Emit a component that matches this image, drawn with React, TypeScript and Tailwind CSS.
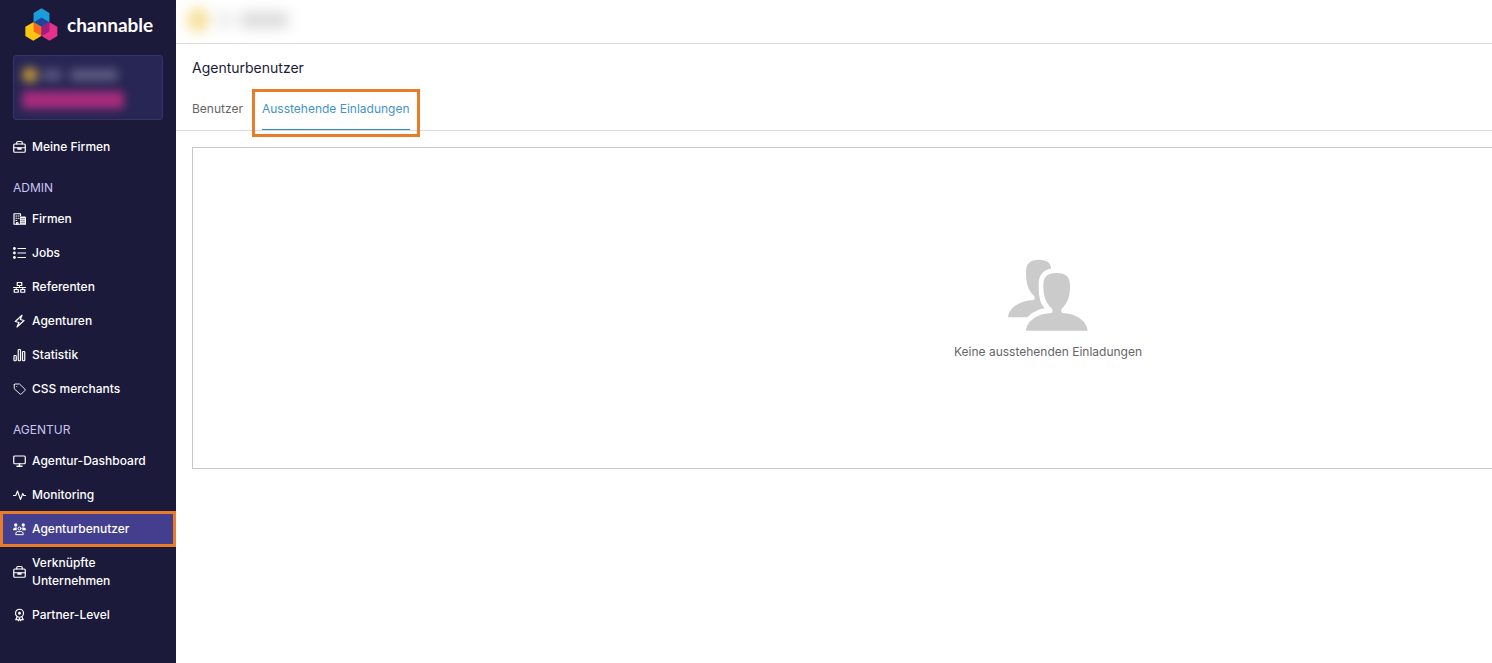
import React from 'react'

type NavItem = { label: string; icon: React.ReactNode; active?: boolean }

function Icon({ children }: { children: React.ReactNode }) {
  return (
    <svg
      viewBox="0 0 26 26"
      className="h-[14px] w-[13px] shrink-0"
      fill="none"
      stroke="currentColor"
      strokeWidth="2.4"
      strokeLinecap="round"
      strokeLinejoin="round"
      aria-hidden="true"
    >
      {children}
    </svg>
  )
}

const briefcase = (
  <Icon>
    <rect x="1.5" y="7" width="23" height="16.5" rx="2" />
    <path d="M7.5 7V4.500A2.500 2.500 0 0 1 10 2h6a2.500 2.500 0 0 1 2.500 2.500V7M1.500 14.500h23" />
    <path d="M10 15.500h6v2h-6z" />
  </Icon>
)

const building = (
  <Icon>
    <path d="M13 23.500H2V2.500h13V6" />
    <path d="M6 7h1.500M10.500 7H12M6 11.500h1.500M10.500 11.500H12M6 16h1.500" />
    <path d="M7 23.500V20h3v3.500" />
    <path d="M14 8h9.500A2.500 2.500 0 0 1 26 10.500v14H14z" fill="currentColor" stroke="none" />
    <path d="M16 12.500h7M16 16.500h7M16 20.500h7" stroke="#1b1a3a" strokeWidth="1.2" />
  </Icon>
)

const list = (
  <Icon>
    <path d="M10 4h15M10 13h15M10 22h15" />
    <g fill="currentColor" stroke="none">
      <circle cx="2.8" cy="4" r="2.8" />
      <circle cx="2.8" cy="13" r="2.8" />
      <circle cx="2.8" cy="22" r="2.8" />
    </g>
  </Icon>
)

const sitemap = (
  <Icon>
    <rect x="8.5" y="4" width="9" height="6" />
    <rect x="2.5" y="18" width="8" height="5.5" />
    <rect x="15.5" y="18" width="8" height="5.5" />
    <path d="M13 10v4M1 14h24M6.500 14v4M19.500 14v4" strokeWidth="2" />
  </Icon>
)

const bolt = (
  <Icon>
    <path d="M18 1.500 4.500 14l7.500 2-4 9L22 12l-7.500-2z" />
  </Icon>
)

const bars = (
  <Icon>
    <rect x="2" y="14" width="4.5" height="10.5" rx="1.5" />
    <rect x="10.5" y="2" width="4.5" height="22.5" rx="1.5" />
    <rect x="19" y="6" width="4.5" height="18.5" rx="1.5" />
  </Icon>
)

const tag = (
  <Icon>
    <path d="M2.500 4.500v8L14 23a2 2 0 0 0 2.800 0l7-7a2 2 0 0 0 0-2.800L13 3H4a1.500 1.500 0 0 0-1.500 1.500z" strokeWidth="1.8" />
    <circle cx="7.5" cy="8" r="1" fill="currentColor" stroke="none" />
  </Icon>
)

const monitor = (
  <Icon>
    <rect x="1.5" y="3" width="23" height="15.5" rx="2" />
    <path d="M13 18.500v4M8 23.500h10" strokeWidth="3" />
  </Icon>
)

const pulse = (
  <Icon>
    <path d="M1 14h4.500L9 5l6 17 4.500-12 2 4H25" strokeWidth="2.2" />
  </Icon>
)

const group = (
  <Icon>
    <g fill="currentColor" stroke="none">
      <circle cx="5.5" cy="5" r="3.3" />
      <circle cx="20.5" cy="5" r="3.3" />
      <path d="M0 15.500c0-4 2-5.500 4.500-5.500H8c-1 2-1 4 0 5.500zM26 15.500c0-4-2-5.500-4.500-5.500H18c1 2 1 4 0 5.500z" />
    </g>
    <circle cx="13" cy="12" r="3" strokeWidth="2" />
    <path d="M5.500 23.500c0-4.500 2-5.500 5-5.500h5c3 0 5 1 5 5.500z" strokeWidth="2" />
  </Icon>
)

const award = (
  <Icon>
    <circle cx="13" cy="9.5" r="8" />
    <circle cx="13" cy="9.5" r="2.8" fill="currentColor" stroke="none" />
    <path d="M8 17 5.500 22.500l3.500-.5 2 2.500 2-5 2 5 2-2.500 3.500.5L18 17" />
  </Icon>
)

const adminItems: NavItem[] = [
  { label: 'Firmen', icon: building },
  { label: 'Jobs', icon: list },
  { label: 'Referenten', icon: sitemap },
  { label: 'Agenturen', icon: bolt },
  { label: 'Statistik', icon: bars },
  { label: 'CSS merchants', icon: tag },
]

const agencyItems: NavItem[] = [
  { label: 'Agentur-Dashboard', icon: monitor },
  { label: 'Monitoring', icon: pulse },
  { label: 'Agenturbenutzer', icon: group, active: true },
  { label: 'Verknüpfte Unternehmen', icon: briefcase },
  { label: 'Partner-Level', icon: award },
]

function NavLink({ label, icon, active }: NavItem) {
  return (
    <a
      href="#"
      aria-current={active ? 'page' : undefined}
      className={
        active
          ? 'relative flex items-center gap-[6px] bg-[#433f8e] py-2 pr-6 pl-[13px] text-white'
          : 'relative flex items-center gap-[6px] py-2 pr-6 pl-[13px] text-white'
      }
    >
      {icon}
      <span>{label}</span>
      {active && <span className="absolute -inset-y-px inset-x-0 border-3 border-[#e87c2a]" />}
    </a>
  )
}

function Section({ title, items }: { title: string; items: NavItem[] }) {
  return (
    <div>
      <h2 className="px-[13px] pt-[15px] pb-[5px] text-[12px] font-normal text-[#c9c6f0]">{title}</h2>
      {items.map((item) => (
        <NavLink key={item.label} {...item} />
      ))}
    </div>
  )
}

function Logo() {
  return (
    <a href="#" className="flex items-center gap-[9px] pt-2 pl-[25px] text-white">
      <svg viewBox="75 22 100 100" className="h-[33px] w-[33px]" aria-hidden="true">
        <path fill="#1b9ddb" d="M125 23l24 14v28l-24 14-24-14V37z" />
        <path fill="#fdc513" d="M100 65l24 14v28l-24 14-24-14V79z" />
        <path fill="#e5308c" d="M149 65l24 14v28l-24 14-24-14V79z" />
        <path fill="#20449b" d="M125 51l24 14-24 14-24-14z" />
        <path fill="#f26a21" d="M101 65l24 14v28l-24-14z" />
        <path fill="#a01c7d" d="M149 65l-24 14v28l24-14z" />
      </svg>
      <span className="font-['Lato',sans-serif] text-[19px] leading-6 font-bold">channable</span>
    </a>
  )
}

function Sidebar() {
  return (
    <aside className="w-44 shrink-0 bg-[#1b1a3a] text-[12px] leading-[18px] font-medium">
      <Logo />
      <div className="mx-[13px] mt-[14px] mb-[10px] flex h-[65px] flex-col gap-2 overflow-hidden rounded-[3px] border border-[#35336a] bg-[#282654] px-2 pt-[11px]">
        <div className="flex items-center gap-1 blur-[5px]">
          <span className="h-4 w-4 rounded-full bg-[#b8943a]" />
          <span className="h-3 w-5 rounded bg-[#55537c]" />
          <span className="ml-1 h-3 w-12 rounded bg-[#5d5b82]" />
        </div>
        <span className="h-[18px] w-[102px] rounded bg-[#a52c7d] blur-[4px]" />
      </div>
      <nav>
        <NavLink label="Meine Firmen" icon={briefcase} />
        <Section title="ADMIN" items={adminItems} />
        <Section title="AGENTUR" items={agencyItems} />
      </nav>
    </aside>
  )
}

function PeopleIcon() {
  return (
    <svg viewBox="204 56 240 216" className="h-[72px] w-20" fill="#cbcbcb" aria-hidden="true">
      <path d="M258 95c0-25 12-37 38-37 22 0 36 8 38 26-24 6-38 20-38 46 0 34 2 56 18 74-22 4-40 14-52 27h-58c3-30 36-50 78-52 3-4 3-8 0-12-18-18-24-38-24-72z" />
      <path d="M310 136c0-26 12-38 40-38s40 12 40 38c0 32-6 50-24 68-3 5-3 9 0 14 42 2 74 22 77 53H258c3-31 35-51 77-53 3-5 3-9 0-14-18-18-25-36-25-68z" />
    </svg>
  )
}

export default function App() {
  return (
    <div className="flex min-h-screen overflow-hidden bg-white font-['Inter',sans-serif]">
      <Sidebar />
      <main className="min-w-0 flex-1">
        <header className="flex h-11 items-center border-b border-[#dcdcdc] px-3">
          <div className="flex items-center gap-2 pb-1 blur-[7px]">
            <span className="h-6 w-5 rounded-full bg-[#f5dc8c]" />
            <span className="h-4 w-4 bg-[#ececec]" />
            <span className="h-4 w-12 bg-[#dadada]" />
          </div>
        </header>
        <h1 className="px-4 pt-[14px] text-[14px] leading-5 text-[#1b1a3a]">Agenturbenutzer</h1>
        <div role="tablist" className="mt-[10px] flex gap-[19px] border-b border-[#dcdcdc] px-4 text-[12px] leading-[18px]">
          <button type="button" role="tab" aria-selected="false" className="h-[42px] text-[#666666]">
            Benutzer
          </button>
          <button type="button" role="tab" aria-selected="true" className="relative h-[42px] text-[#4493cb]">
            Ausstehende Einladungen
            <span className="absolute inset-x-0 bottom-0 h-px bg-[#2f8ac6]" />
            <span className="absolute -inset-x-[10px] top-[1px] -bottom-[7px] border-3 border-[#e87c2a]" />
          </button>
        </div>
        {/* the panel is wider than small windows and runs off to the right */}
        <section className="mt-4 ml-4 flex h-[322px] min-w-[1712px] flex-col items-center justify-center gap-3 border border-[#c8c8c8] pt-1">
          <PeopleIcon />
          <p className="text-[12px] leading-[18px] text-[#666666]">Keine ausstehenden Einladungen</p>
        </section>
      </main>
    </div>
  )
}
